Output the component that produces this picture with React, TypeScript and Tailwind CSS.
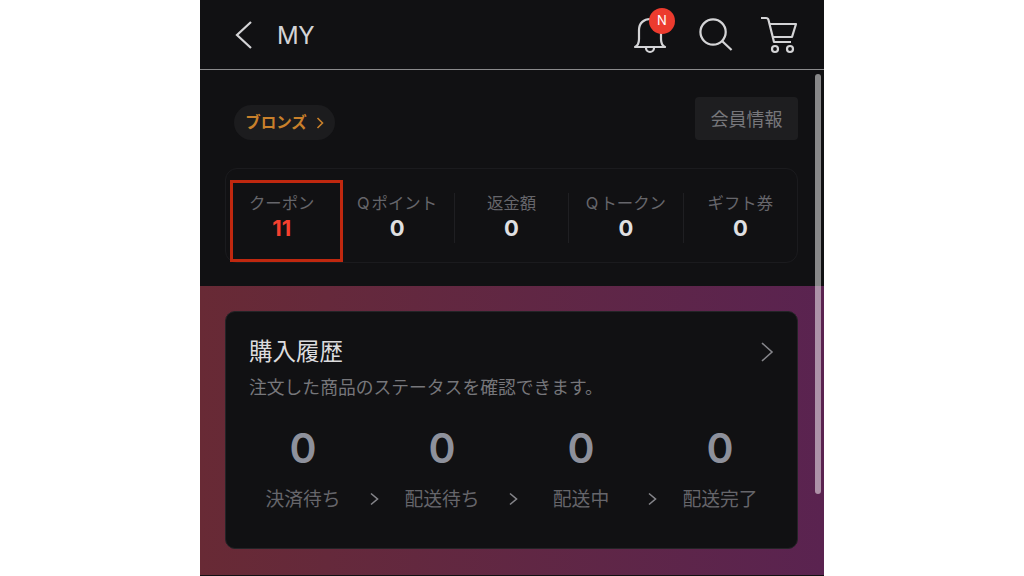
const FONT = "font-['Inter','Noto_Sans_CJK_JP',sans-serif]";

function Stat({ label, value, red, divider, q }: { label: string; value: string; red?: boolean; divider?: boolean; q?: boolean }) {
  return (
    <div className={`flex-1 flex flex-col items-center h-[50px] ${divider ? "border-r border-[#1f1f22]" : ""} ${red ? "-translate-x-[2px]" : ""}`}>
      <div className="text-[16.4px] leading-[20px] text-[#66666b] whitespace-nowrap">
        {q && <span className="mr-[2px]">Q</span>}
        {label}
      </div>
      <div className={`text-[22px] leading-[31px] font-bold ${red ? "text-[#f4402f]" : "text-[#e0e0e2]"}`}>{value}</div>
    </div>
  );
}

function Step({ value, label }: { value: string; label: string }) {
  return (
    <div className="w-[128px] shrink-0 flex flex-col items-center">
      <div className="text-[41px] leading-[50px] font-semibold text-[#8e919c]">{value}</div>
      <div className="mt-[14px] text-[18.8px] leading-[26px] text-[#66666b] whitespace-nowrap">{label}</div>
    </div>
  );
}

function Arrow() {
  return (
    <svg width="11" height="14" viewBox="0 0 10 14" fill="none" className="mt-[69px] ml-[2px] mr-[-2px] shrink-0">
      <path d="M1.5 1.5 L8 7 L1.5 12.5" stroke="#85858a" strokeWidth="1.6" />
    </svg>
  );
}

export default function App() {
  return (
    <div className={`w-[1024px] h-[576px] bg-white flex justify-center overflow-hidden ${FONT}`}>
      <div className="relative w-[624px] h-[576px] bg-[#111113] flex flex-col overflow-hidden">
        <header className="h-[70px] shrink-0 border-b border-[#8a8a8c] flex items-center pl-[35px] pr-[26px]">
          <svg width="18" height="30" viewBox="0 0 18 30" fill="none">
            <path d="M16 2 L2 15 L16 28" stroke="#d4d4d6" strokeWidth="2.2" />
          </svg>
          <div className="ml-[24px] mt-[2px] text-[24px] leading-[30px] text-[#d4d4d6] tracking-[-0.5px]">MY</div>
          <div className="ml-auto flex items-center gap-[27px]">
            <div className="relative w-[40px] h-[52px] mt-[2px]">
              <svg width="34" height="40" viewBox="0 0 34 40" fill="none" className="absolute left-[2px] top-[5px]" stroke="#d4d4d6" strokeWidth="2.2">
                <path d="M2 32 Q6 30 6 24 V15 C6 8 11 4 17 4 C23 4 28 8 28 15 V24 Q28 30 32 32 Z" strokeLinejoin="round" />
                <path d="M13 33 A4 4 0 0 0 21 33" />
              </svg>
              <div className="absolute left-[18px] top-[-2px] w-[26px] h-[26px] rounded-full bg-[#ec3b2e] flex items-center justify-center text-white text-[13px] leading-none">N</div>
            </div>
            <svg width="35" height="35" viewBox="0 0 36 36" fill="none" stroke="#d4d4d6" strokeWidth="2.3">
              <circle cx="15.5" cy="15.5" r="13" />
              <path d="M25 25 L34.5 34" />
            </svg>
            <svg width="38" height="38" viewBox="0 0 38 38" fill="none" stroke="#d4d4d6" strokeWidth="2.2">
              <path d="M1 2 H6 Q8 2 8.5 4 L14 26 H31" strokeLinejoin="round" />
              <path d="M9 8 H36 L32 21 H12" strokeLinejoin="round" />
              <circle cx="15" cy="33" r="3" />
              <circle cx="30" cy="33" r="3" />
            </svg>
          </div>
        </header>

        <div className="pl-[25px] pr-[26px] shrink-0">
          <div className="flex items-start justify-between pl-[9px] pt-[27px]">
            <div className="mt-[8px] h-[35px] w-[101px] rounded-full bg-[#1c1c1e] flex items-center justify-center gap-[9px]">
              <span className="text-[15.5px] font-bold text-[#c9802b] whitespace-nowrap">ブロンズ</span>
              <svg width="8" height="12" viewBox="0 0 8 12" fill="none">
                <path d="M1.5 1 L6.5 6 L1.5 11" stroke="#c9802b" strokeWidth="1.6" />
              </svg>
            </div>
            <div className="w-[103px] h-[43px] rounded-[4px] bg-[#1e1e20] flex items-center justify-center text-[18px] pt-[2px] text-[#77777b]">会員情報</div>
          </div>
          <div className="mt-[28px] h-[95px] rounded-[12px] border border-[#1b1b1e] flex pt-[24px] pl-[1px]">
            <Stat label="クーポン" value="11" red />
            <Stat label="ポイント" value="0" divider q />
            <Stat label="返金額" value="0" divider />
            <Stat label="トークン" value="0" divider q />
            <Stat label="ギフト券" value="0" />
          </div>
        </div>

        <section className="mt-[23px] h-[289px] shrink-0 bg-gradient-to-r from-[#682a35] to-[#5a2350] pl-[25px] pr-[26px] pt-[25px]">
          <div className="h-[238px] rounded-[10px] bg-[#111113] border border-[#242427] px-[23px] pt-[24px]">
            <div className="flex items-center justify-between">
              <div className="text-[23.5px] leading-[32px] text-[#dcdcde]">購入履歴</div>
              <svg width="14" height="22" viewBox="0 0 14 22" fill="none">
                <path d="M2 2 L12 11 L2 20" stroke="#85858a" strokeWidth="1.6" />
              </svg>
            </div>
            <div className="mt-[8px] text-[17.8px] leading-[24px] text-[#77777b] whitespace-nowrap">注文した商品のステータスを確認できます。</div>
            <div className="mt-[23px] flex items-start justify-center">
              <Step value="0" label="決済待ち" />
              <Arrow />
              <Step value="0" label="配送待ち" />
              <Arrow />
              <Step value="0" label="配送中" />
              <Arrow />
              <Step value="0" label="配送完了" />
            </div>
          </div>
        </section>

        <div className="absolute left-[30px] top-[180px] w-[113px] h-[82px] border-[3px] border-[#c0280f]" />
        <div className="absolute left-[615px] top-[74px] w-[6px] h-[420px] rounded-full bg-white/50" />
      </div>
    </div>
  );
}
